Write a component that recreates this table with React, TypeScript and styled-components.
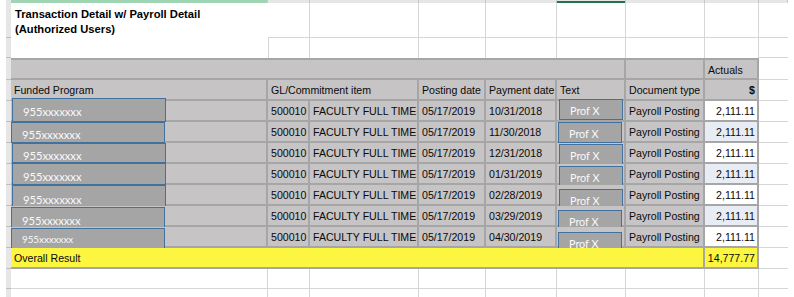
import React from "react";
import styled, { createGlobalStyle } from "styled-components";

const GlobalStyle = createGlobalStyle`
  html, body {
    margin: 0;
    padding: 0;
    background: #ffffff;
  }
  body {
    font-family: "Liberation Sans", Arial, sans-serif;
    overflow: hidden;
  }
`;

const COLUMN_WIDTHS = [257, 42, 109, 67, 71, 69, 79, 54, 29];
const ROW_HEIGHTS = [35, 20, 22, 21, 21, 21, 21, 21, 21, 21, 21, 21, 20, 20];

type Tone = "blank" | "gray" | "yellow" | "white" | "tint";

const toneFill: Record<Tone, string> = {
  blank: "#ffffff",
  gray: "#c6c4c5",
  yellow: "#fcf640",
  white: "#ffffff",
  tint: "#e8edf5",
};

const Sheet = styled.div`
  display: grid;
  grid-template-columns: 5px auto;
  grid-template-rows: 3px auto;
  margin-left: 6px;
  width: 782px;
  height: 297px;
  overflow: hidden;
`;

const Corner = styled.div`
  background: #e6e6e6;
`;

const ColumnBar = styled.div`
  display: flex;
  height: 3px;
`;

const ColumnTab = styled.div<{ $w: number; $selected?: boolean; $current?: boolean }>`
  box-sizing: border-box;
  width: ${(p) => p.$w}px;
  height: 3px;
  background: ${(p) => (p.$selected ? "#a0d5b4" : "#e6e6e6")};
  border-right: 1px solid #c8c8c8;
  box-shadow: ${(p) => (p.$current ? "inset 0 -2px 0 #217346" : "none")};
`;

const RowStrip = styled.div`
  display: flex;
  flex-direction: column;
`;

const RowTab = styled.div<{ $h: number }>`
  box-sizing: border-box;
  height: ${(p) => p.$h}px;
  flex-shrink: 0;
  background: #e6e6e6;
  border-bottom: 1px solid #bdbdbd;
`;

const Grid = styled.div`
  display: grid;
  grid-template-columns: ${COLUMN_WIDTHS.map((w) => `${w}px`).join(" ")};
  grid-template-rows: ${ROW_HEIGHTS.map((h) => `${h}px`).join(" ")};
`;

interface CellProps {
  $tone?: Tone;
  $span?: number;
  $rowSpan?: number;
  $align?: "left" | "right";
  $bold?: boolean;
  $bandTop?: boolean;
  $noRight?: boolean;
  $noBottom?: boolean;
  $leftLine?: boolean;
}

const Cell = styled.div<CellProps>`
  position: relative;
  box-sizing: border-box;
  grid-column: span ${(p) => p.$span ?? 1};
  grid-row: span ${(p) => p.$rowSpan ?? 1};
  display: flex;
  align-items: center;
  justify-content: ${(p) => (p.$align === "right" ? "flex-end" : "flex-start")};
  padding: 2px 2px 0 3px;
  font-size: 10.6px;
  line-height: 13px;
  font-weight: ${(p) => (p.$bold ? 700 : 400)};
  color: #0a0a0a;
  white-space: nowrap;
  background: ${(p) => toneFill[p.$tone ?? "blank"]};
  border-top: ${(p) => (p.$bandTop ? "2px solid #a6a6a6" : "none")};
  border-left: ${(p) => (p.$leftLine ? "1px solid #d6d6d6" : "none")};
  border-right: ${(p) =>
    p.$noRight
      ? "none"
      : (p.$tone ?? "blank") === "blank"
      ? "1px solid #d6d6d6"
      : "2px solid #a6a6a6"};
  border-bottom: ${(p) =>
    p.$noBottom
      ? "none"
      : (p.$tone ?? "blank") === "blank"
      ? "1px solid #d6d6d6"
      : "2px solid #a6a6a6"};
`;

const TitleCell = styled(Cell)`
  align-items: flex-start;
  flex-direction: column;
  padding: 4px 0 0 4px;
  font-size: 11.2px;
  line-height: 14.5px;
  font-weight: 700;
  color: #000;
`;

const Redaction = styled.div<{ $left: number; $top: number; $h: number; $shift: number; $small?: boolean }>`
  position: absolute;
  box-sizing: border-box;
  left: ${(p) => p.$left}px;
  top: ${(p) => p.$top}px;
  width: 154px;
  height: ${(p) => p.$h}px;
  display: flex;
  align-items: center;
  padding: ${(p) => p.$shift}px 0 0 10px;
  background: #a5a5a5;
  border: 1px solid #41719c;
  color: #fafafa;
  font-family: Lato, "Open Sans", sans-serif;
  font-size: ${(p) => (p.$small ? 9.8 : 11.2)}px;
  line-height: 12px;
`;

const ProfTag = styled.div<{ $left: number; $top: number }>`
  position: absolute;
  box-sizing: border-box;
  left: ${(p) => p.$left}px;
  top: ${(p) => p.$top}px;
  width: 64px;
  height: 21px;
  display: flex;
  align-items: center;
  padding: 3px 0 0 10px;
  background: #a5a5a5;
  border: 1px solid #41719c;
  color: #fafafa;
  font-family: Lato, "Open Sans", sans-serif;
  font-size: 10.8px;
  line-height: 12px;
`;

const rows = [
  { paid: "10/31/2018", tint: false, red: { l: 1, t: -3, h: 24, s: 3 }, prof: { l: 2, t: -2 } },
  { paid: "11/30/2018", tint: true, red: { l: 0, t: 0, h: 21, s: 5 }, prof: { l: 1, t: 0 } },
  { paid: "12/31/2018", tint: false, red: { l: 1, t: 0, h: 20, s: 6 }, prof: { l: 2, t: 1 } },
  { paid: "01/31/2019", tint: true, red: { l: 1, t: -1, h: 22, s: 6 }, prof: { l: 2, t: 2 } },
  { paid: "02/28/2019", tint: false, red: { l: 1, t: 0, h: 22, s: 8 }, prof: { l: 2, t: 4 } },
  { paid: "03/29/2019", tint: true, red: { l: 0, t: 1, h: 21, s: 7 }, prof: { l: 1, t: 4 } },
  { paid: "04/30/2019", tint: false, red: { l: 0, t: 1, h: 21, s: 1 }, prof: { l: 1, t: 5 } },
];

const BlankRow: React.FC = () => (
  <>
    {COLUMN_WIDTHS.slice(0, 8).map((_, i) => (
      <Cell key={i} />
    ))}
    <Cell $noRight />
  </>
);

export default function App() {
  return (
    <>
      <GlobalStyle />
      <Sheet>
        <Corner />
        <ColumnBar>
          {COLUMN_WIDTHS.map((w, i) => (
            <ColumnTab key={i} $w={w} $selected={i === 0} $current={i === 5} />
          ))}
        </ColumnBar>
        <RowStrip>
          {ROW_HEIGHTS.map((h, i) => (
            <RowTab key={i} $h={h} />
          ))}
        </RowStrip>
        <Grid>
          {/* title block */}
          <TitleCell $rowSpan={2} $noRight $noBottom>
            <span>Transaction Detail w/ Payroll Detail</span>
            <span>(Authorized Users)</span>
          </TitleCell>
          <Cell />
          <Cell />
          <Cell />
          <Cell />
          <Cell />
          <Cell />
          <Cell />
          <Cell $noRight />

          <Cell $leftLine $noBottom />
          <Cell $noBottom />
          <Cell $noBottom />
          <Cell $noBottom />
          <Cell $noBottom />
          <Cell $noBottom />
          <Cell $noBottom />
          <Cell $noRight />

          {/* gray band */}
          <Cell $tone="gray" $span={6} $bandTop />
          <Cell $tone="gray" $bandTop />
          <Cell $tone="gray" $bandTop>Actuals</Cell>
          <Cell $noRight />

          {/* column headings */}
          <Cell $tone="gray">Funded Program</Cell>
          <Cell $tone="gray" $span={2}>GL/Commitment item</Cell>
          <Cell $tone="gray">Posting date</Cell>
          <Cell $tone="gray">Payment date</Cell>
          <Cell $tone="gray">Text</Cell>
          <Cell $tone="gray">Document type</Cell>
          <Cell $tone="gray" $align="right" $bold>$</Cell>
          <Cell $noRight />

          {rows.map((r, i) => (
            <React.Fragment key={r.paid}>
              <Cell $tone="gray">
                <Redaction
                  $left={r.red.l}
                  $top={r.red.t}
                  $h={r.red.h}
                  $shift={r.red.s}
                  $small={i === rows.length - 1}
                >
                  955xxxxxxx
                </Redaction>
              </Cell>
              <Cell $tone="gray">500010</Cell>
              <Cell $tone="gray">FACULTY FULL TIME</Cell>
              <Cell $tone="gray">05/17/2019</Cell>
              <Cell $tone="gray">{r.paid}</Cell>
              <Cell $tone="gray">
                <ProfTag $left={r.prof.l} $top={r.prof.t}>Prof X</ProfTag>
              </Cell>
              <Cell $tone="gray">Payroll Posting</Cell>
              <Cell $tone={r.tint ? "tint" : "white"} $align="right">2,111.11</Cell>
              <Cell $noRight />
            </React.Fragment>
          ))}

          {/* totals */}
          <Cell $tone="yellow" $span={7}>Overall Result</Cell>
          <Cell $tone="yellow" $align="right">14,777.77</Cell>
          <Cell $noRight />

          <BlankRow />
          <BlankRow />
        </Grid>
      </Sheet>
    </>
  );
}
